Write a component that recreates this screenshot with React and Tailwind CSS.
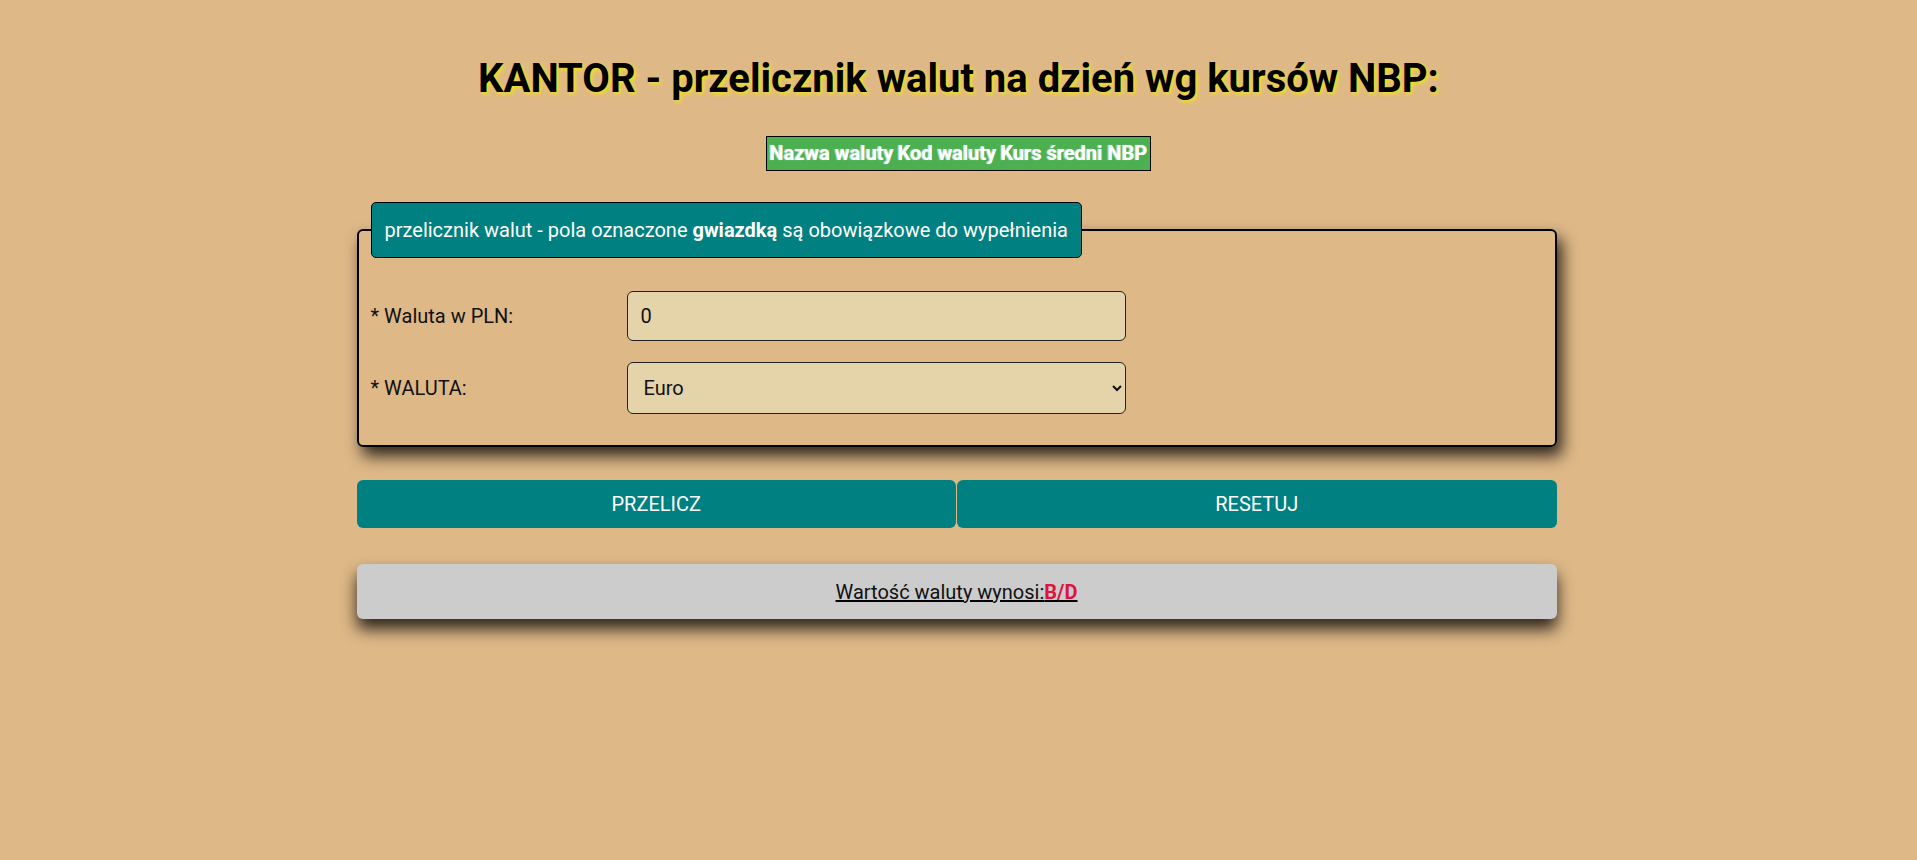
import React, { useState } from 'react';

const waluty = [
  { name: 'Euro', code: 'EUR' },
  { name: 'Dolar amerykański', code: 'USD' },
  { name: 'Frank szwajcarski', code: 'CHF' },
  { name: 'Funt szterling', code: 'GBP' },
];

const App = () => {
  const [kwota, setKwota] = useState('0');
  const [waluta, setWaluta] = useState('EUR');

  return (
    <div className="min-h-[860px] w-full bg-[#deb887] font-['Roboto',sans-serif] text-[20px] text-[#111] pb-10">
      <h1 className="pt-[55px] text-center text-[40px] leading-[48px] font-bold text-black [text-shadow:2px_2px_4px_#f2e21a]">
        KANTOR - przelicznik walut na dzień wg kursów NBP:
      </h1>

      <div className="mt-[33px] flex justify-center">
        <table className="border border-black bg-[#4caf50] border-separate border-spacing-[2px]">
          <thead>
            <tr>
              <th className="px-px py-[3px] text-[20px] leading-[23px] font-bold text-white [text-shadow:-1px_0_1px_#aee9ff]">Nazwa waluty</th>
              <th className="px-px py-[3px] text-[20px] leading-[23px] font-bold text-white [text-shadow:-1px_0_1px_#aee9ff]">Kod waluty</th>
              <th className="px-px py-[3px] text-[20px] leading-[23px] font-bold text-white [text-shadow:-1px_0_1px_#aee9ff]">Kurs średni NBP</th>
            </tr>
          </thead>
        </table>
      </div>

      <div className="mt-[31px] flex justify-center pr-[4px]">
        <div className="w-[1200px]">
          <fieldset className="rounded-[6px] border-2 border-black px-[12px] pb-[31px] shadow-[5px_9px_16px_rgba(0,0,0,0.8)]">
            <legend className="rounded-[5px] border border-black bg-[#008080] px-[13px] py-[15px] leading-[24px] text-white">
              przelicznik walut - pola oznaczone <b>gwiazdką</b> są obowiązkowe do wypełnienia
            </legend>

            <div className="mt-[33px] flex items-center">
              <label htmlFor="kwota" className="w-[256px]">* Waluta w PLN:</label>
              <input
                id="kwota"
                type="text"
                value={kwota}
                onChange={(e) => setKwota(e.target.value)}
                className="h-[50px] w-[499px] rounded-[6px] border border-[#222] bg-[#e5d4aa] px-[13px] text-[20px] text-[#111] outline-none"
              />
            </div>

            <div className="mt-[21px] flex items-center">
              <label htmlFor="waluta" className="w-[256px]">* WALUTA:</label>
              <select
                id="waluta"
                value={waluta}
                onChange={(e) => setWaluta(e.target.value)}
                className="h-[52px] w-[499px] rounded-[6px] border border-[#222] bg-[#e5d4aa] px-[12px] text-[20px] text-[#111] outline-none"
              >
                {waluty.map((w) => (
                  <option key={w.code} value={w.code}>
                    {w.name}
                  </option>
                ))}
              </select>
            </div>
          </fieldset>

          <div className="mt-[33px] flex">
            <button className="h-[48px] flex-1 rounded-[6px] bg-[#008080] text-[20px] text-white">PRZELICZ</button>
            <button
              onClick={() => setKwota('0')}
              className="ml-px h-[48px] flex-1 rounded-[6px] bg-[#008080] text-[20px] text-white"
            >
              RESETUJ
            </button>
          </div>

          <div className="mt-[36px] flex h-[55px] items-center justify-center rounded-[6px] bg-[#cccccc] shadow-[0_10px_16px_rgba(0,0,0,0.8)]">
            <p className="underline decoration-black text-[#111]">
              Wartość waluty wynosi:<span className="font-bold text-[#dc143c]">B/D</span>
            </p>
          </div>
        </div>
      </div>
    </div>
  );
};

export default App;
